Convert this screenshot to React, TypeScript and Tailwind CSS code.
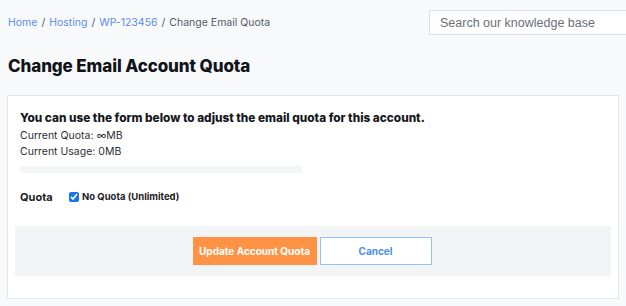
export default function App() {
  return (
    <div className="min-h-screen w-full overflow-hidden bg-[#f8f9fb] px-[7px] pt-[10px] font-['Inter',sans-serif]">
      <div className="flex items-center justify-between">
        <nav className="flex items-center gap-[4px] pl-px text-[10.5px] text-[#555b66]">
          <a className="text-[#5b8def]">Home</a>
          <span>/</span>
          <a className="text-[#5b8def]">Hosting</a>
          <span>/</span>
          <a className="text-[#5b8def]">WP-123456</a>
          <span>/</span>
          <span>Change Email Quota</span>
        </nav>
        <input
          placeholder="Search our knowledge base"
          className="-mr-[20px] h-[25px] w-[210px] shrink-0 border border-[#d7e0ec] bg-white px-[10px] font-['Liberation_Sans',sans-serif] text-[12.5px] placeholder:text-[#6b7078]"
        />
      </div>

      <h1 className="mt-[20px] pl-px text-[17px] leading-[22px] font-extrabold tracking-[-0.1px] text-[#111418]">
        Change Email Account Quota
      </h1>

      <div className="mt-[18px] border border-[#e3e6ec] bg-white px-[7px] pt-[13px] pb-[22px]">
        <div className="px-[5px]">
          <p className="text-[11.8px] leading-[18px] font-extrabold text-[#15181d]">
            You can use the form below to adjust the email quota for this account.
          </p>
          <p className="mt-px text-[10.5px] leading-[16px] text-[#2b2f36]">Current Quota: ∞MB</p>
          <p className="text-[10.5px] leading-[16px] text-[#2b2f36]">Current Usage: 0MB</p>
          <div className="mt-[6px] h-[7px] w-[282px] bg-[#f3f4f6]" />
          <div className="mt-[17px] flex h-[14px] items-center">
            <span className="w-[49px] text-[11px] font-bold text-[#1d2127]">Quota</span>
            <label className="flex items-center gap-[3px] text-[9.5px] font-bold text-[#1d2127]">
              <input type="checkbox" defaultChecked className="h-[10px] w-[10px] accent-[#1a73e8]" />
              No Quota (Unlimited)
            </label>
          </div>
        </div>
        <div className="mt-[22px] flex h-[50px] items-center justify-center gap-[3px] bg-[#f3f4f6] pr-[2px]">
          <button className="h-[28px] w-[124px] bg-[#ff9345] text-[10px] font-bold text-white">
            Update Account Quota
          </button>
          <button className="h-[28px] w-[112px] border border-[#93c3f2] bg-white text-[10px] font-bold text-[#4b8ee6]">
            Cancel
          </button>
        </div>
      </div>
    </div>
  );
}
